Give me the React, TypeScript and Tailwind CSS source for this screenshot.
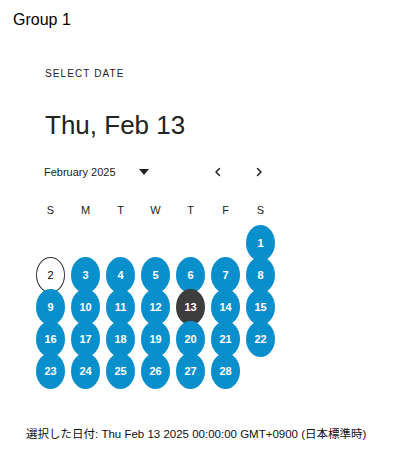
import React from 'react'

const weekdays = ['S', 'M', 'T', 'W', 'T', 'F', 'S']

// February 2025 starts on a Saturday
const leading = 6
const days = Array.from({ length: 28 }, (_, i) => i + 1)

function Chevron({ dir }: { dir: 'left' | 'right' }) {
  return (
    <svg width="12" height="12" viewBox="0 0 24 24" fill="none" stroke="#222" strokeWidth={3} strokeLinecap="round" strokeLinejoin="round">
      {dir === 'left' ? <path d="M15 5l-7 7 7 7" /> : <path d="M9 5l7 7-7 7" />}
    </svg>
  )
}

export default function App() {
  const selected = 13
  const today = 2

  return (
    <div className="min-h-[465px] w-[407px] bg-white font-['Liberation_Sans','Noto_Sans_CJK_JP',sans-serif] text-black">
      <div className="pl-[13px] pt-[11px] text-[16px] leading-[18px]">Group 1</div>

      <div className="pl-[33px]">
        {/* Toolbar */}
        <div className="pl-[12px] pt-[39px] text-[10px] leading-[12px] tracking-[1.1px] text-[#222]">SELECT DATE</div>
        <div className="pl-[12px] pt-[30px] text-[26px] leading-[30px] text-[#222]">Thu, Feb 13</div>

        {/* Month header */}
        <div className="mt-[20px] flex h-[24px] items-center">
          <div className="flex w-[179px] items-center pl-[11px] text-[11px] text-[#222]">
            <span>February 2025</span>
            <svg className="ml-[23px]" width="10" height="6" viewBox="0 0 10 6">
              <path d="M0 0h10L5 6z" fill="#222" />
            </svg>
          </div>
          <div className="flex w-[12px] justify-center">
            <Chevron dir="left" />
          </div>
          <div className="ml-[29px] flex w-[12px] justify-center">
            <Chevron dir="right" />
          </div>
        </div>

        {/* Weekdays */}
        <div className="mt-[19px] grid grid-cols-[repeat(7,35px)] text-[11px] leading-[14px] text-[#222]">
          {weekdays.map((d, i) => (
            <div key={i} className="text-center">{d}</div>
          ))}
        </div>

        {/* Days */}
        <div className="mt-[10px] grid grid-cols-[repeat(7,35px)] auto-rows-[32px]">
          {Array.from({ length: leading }).map((_, i) => (
            <div key={'e' + i} />
          ))}
          {days.map((d) => {
            const isSel = d === selected
            const isToday = d === today
            return (
              <div key={d} className="flex items-center justify-center">
                <div
                  className={
                    isToday
                      ? 'flex h-[36px] w-[29px] shrink-0 items-center justify-center rounded-[50%] border border-[#333] bg-white text-[11px] text-black'
                      : isSel
                        ? 'flex h-[36px] w-[29px] shrink-0 items-center justify-center rounded-[50%] bg-[#3d3d3d] text-[11px] font-bold text-white'
                        : 'flex h-[36px] w-[29px] shrink-0 items-center justify-center rounded-[50%] bg-[#0a8fcd] text-[11px] font-bold text-white'
                  }
                >
                  {d}
                </div>
              </div>
            )
          })}
        </div>
      </div>

      <div className="pl-[26px] pt-[40px] text-[11.5px] leading-[14px] text-[#111]">
        選択した日付: Thu Feb 13 2025 00:00:00 GMT+0900 (日本標準時)
      </div>
    </div>
  )
}
